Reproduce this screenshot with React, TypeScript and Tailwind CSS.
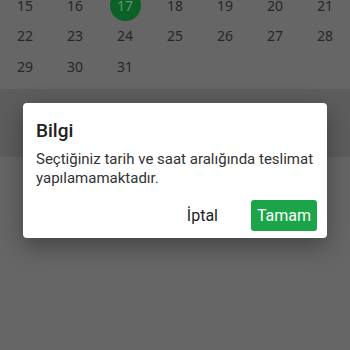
export default function App() {
  const rows = [
    ["15", "16", "17", "18", "19", "20", "21"],
    ["22", "23", "24", "25", "26", "27", "28"],
    ["29", "30", "31", "", "", "", ""],
  ]

  return (
    <div className="relative w-[350px] h-[350px] overflow-hidden bg-[#666666]">
      {/* dimmed calendar */}
      <div className="mt-[-10px] grid grid-cols-7 font-['Noto_Sans',sans-serif] text-[14px] text-[#262626]">
        {rows.flat().map((d, i) => (
          <div key={i} className="h-[30.5px] flex items-center justify-center">
            {d === "17" ? (
              <div className="w-[31px] h-[31px] rounded-full bg-[#0c6226] text-[#6d8f75] flex items-center justify-center">
                {d}
              </div>
            ) : (
              d
            )}
          </div>
        ))}
      </div>
      <div className="mt-[7px] h-[68px] bg-[#5d5d5d]" />

      {/* dialog */}
      <div className="absolute left-[23px] top-[103px] w-[304px] h-[135px] rounded-[4px] bg-white shadow-[0_8px_24px_rgba(0,0,0,0.35)] px-[13px] pt-[16px] font-['Roboto',sans-serif]">
        <h2 className="text-[19px] leading-[24px] font-medium text-[#212121]">Bilgi</h2>
        <p className="mt-[7px] text-[15px] leading-[19px] text-[#333333]">
          Seçtiğiniz tarih ve saat aralığında teslimat yapılamamaktadır.
        </p>
        <div className="mt-[12px] flex items-center justify-end gap-[27px]">
          <button className="text-[16px] text-[#222222] px-[6px] h-[31px]">İptal</button>
          <button className="mr-[-3px] h-[31px] w-[66px] rounded-[3px] bg-[#1ba548] text-[16px] text-white">
            Tamam
          </button>
        </div>
      </div>
    </div>
  )
}
